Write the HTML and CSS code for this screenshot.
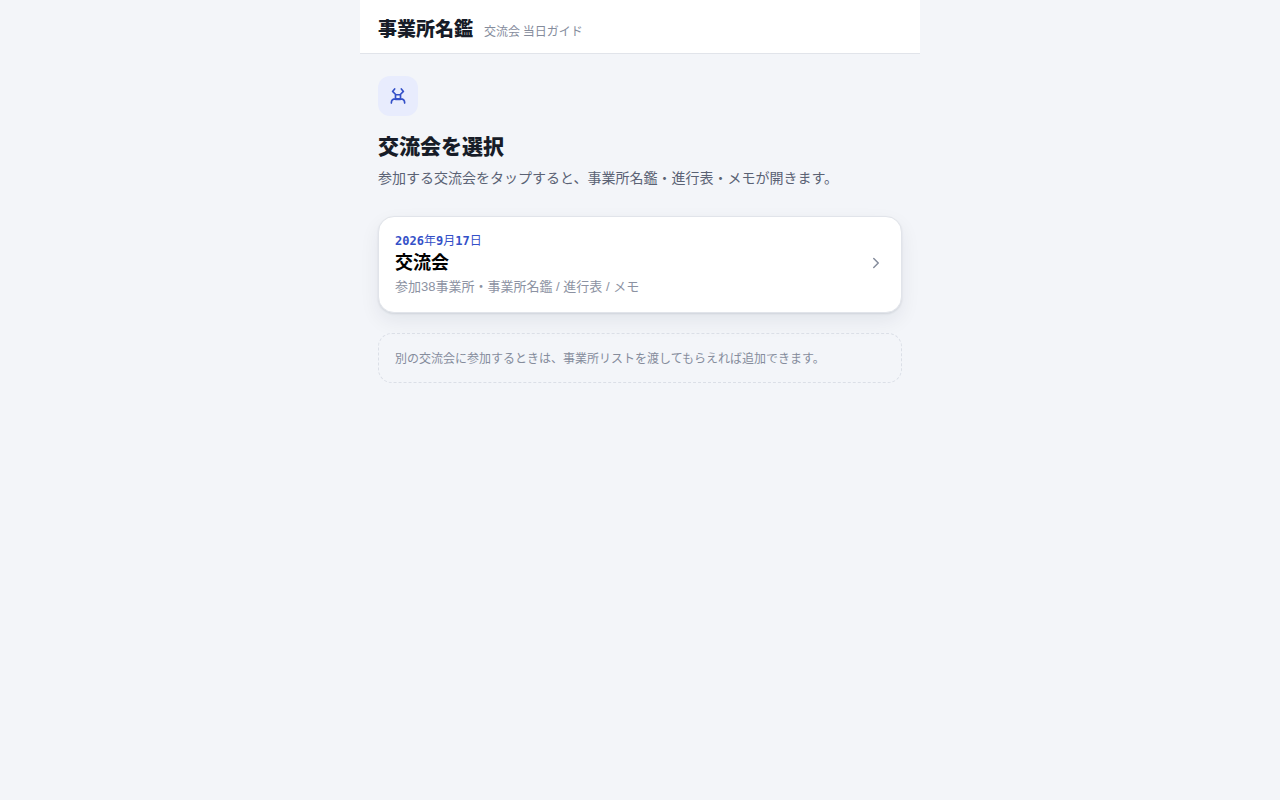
FILE: index.html
```html
<!DOCTYPE html>
<html lang="ja">
<head>
<meta charset="utf-8">
<meta name="viewport" content="width=device-width, initial-scale=1">
<title>事業所名鑑</title>
<link rel="stylesheet" href="styles.css">
</head>
<body>
<div class="app">
  <header class="header">
    <h1 class="brand">事業所名鑑</h1>
    <span class="tagline">交流会 当日ガイド</span>
  </header>
  <main class="main">
    <div class="badge">
      <svg width="20" height="20" viewBox="0 0 24 24" fill="none" stroke="currentColor" stroke-width="2" stroke-linecap="round" stroke-linejoin="round" aria-hidden="true"><path d="M8 3.500 5.500 6.500l4 4M16 3.500l2.500 3-4 4M9 10.500h6v5.500H9zM4 20.500c0-3 2-5 5-5h6c3 0 5 2 5 5"/></svg>
    </div>
    <h2 class="title">交流会を選択</h2>
    <p class="lead">参加する交流会をタップすると、事業所名鑑・進行表・メモが開きます。</p>
    <button class="card" type="button">
      <span class="card-body">
        <span class="date"><b>2026</b>年<b>9</b>月<b>17</b>日</span>
        <span class="name">交流会</span>
        <span class="meta">参加38事業所・事業所名鑑 / 進行表 / メモ</span>
      </span>
      <svg class="chevron" width="18" height="18" viewBox="0 0 24 24" fill="none" stroke="currentColor" stroke-width="2" stroke-linecap="round" stroke-linejoin="round" aria-hidden="true"><path d="m9 18 6-6-6-6"/></svg>
    </button>
    <p class="note">別の交流会に参加するときは、事業所リストを渡してもらえれば追加できます。</p>
  </main>
</div>
</body>
</html>
```
FILE: styles.css
```css
* { box-sizing: border-box; }
body {
  margin: 0;
  background: #f3f5f9;
  color: #171c28;
  font-family: "Noto Sans CJK JP", sans-serif;
}
.app { max-width: 560px; margin: 0 auto; }
.header {
  display: flex;
  align-items: baseline;
  gap: 11px;
  padding: 14px 18px 11px;
  background: #fff;
  border-bottom: 1px solid #e1e4ea;
}
.brand { margin: 0; font-size: 19px; line-height: 28px; font-weight: 900; }
.tagline { font-size: 12px; color: #858c9c; }
.main { padding: 22px 18px; }
.badge {
  display: grid;
  place-items: center;
  width: 40px;
  height: 40px;
  border-radius: 12px;
  background: #e8ecfd;
  color: #3450c8;
}
.title { margin: 14px 0 0; font-size: 21px; line-height: 30px; font-weight: 900; }
.lead { margin: 5px 0 27px; font-size: 14px; line-height: 24px; color: #5a6274; }
.card {
  display: flex;
  align-items: center;
  width: 100%;
  padding: 16px 16px 15px;
  border: 1px solid #e1e4ea;
  border-radius: 16px;
  background: #fff;
  box-shadow: 0 1px 2px rgba(20, 30, 50, 0.1), 0 8px 20px rgba(20, 30, 50, 0.07);
  color: #000;
  text-align: left;
  font-family: "Liberation Sans", "Noto Sans CJK JP", sans-serif;
}
.card-body { display: flex; flex: 1; flex-direction: column; }
.date {
  color: #3450c8;
  font-family: "DejaVu Sans Mono", "Noto Sans CJK JP", monospace;
  font-size: 12px;
  line-height: 16px;
}
.name { font-size: 18px; line-height: 28px; font-weight: 700; }
.meta { font-size: 13px; line-height: 20px; color: #8c92a2; }
.chevron { margin-bottom: 4px; color: #858c9c; }
.note {
  margin: 20px 0 0;
  padding: 14px 16px;
  border: 1px dashed #dbdfe7;
  border-radius: 14px;
  font-size: 12px;
  line-height: 20px;
  color: #858c9c;
}
```
